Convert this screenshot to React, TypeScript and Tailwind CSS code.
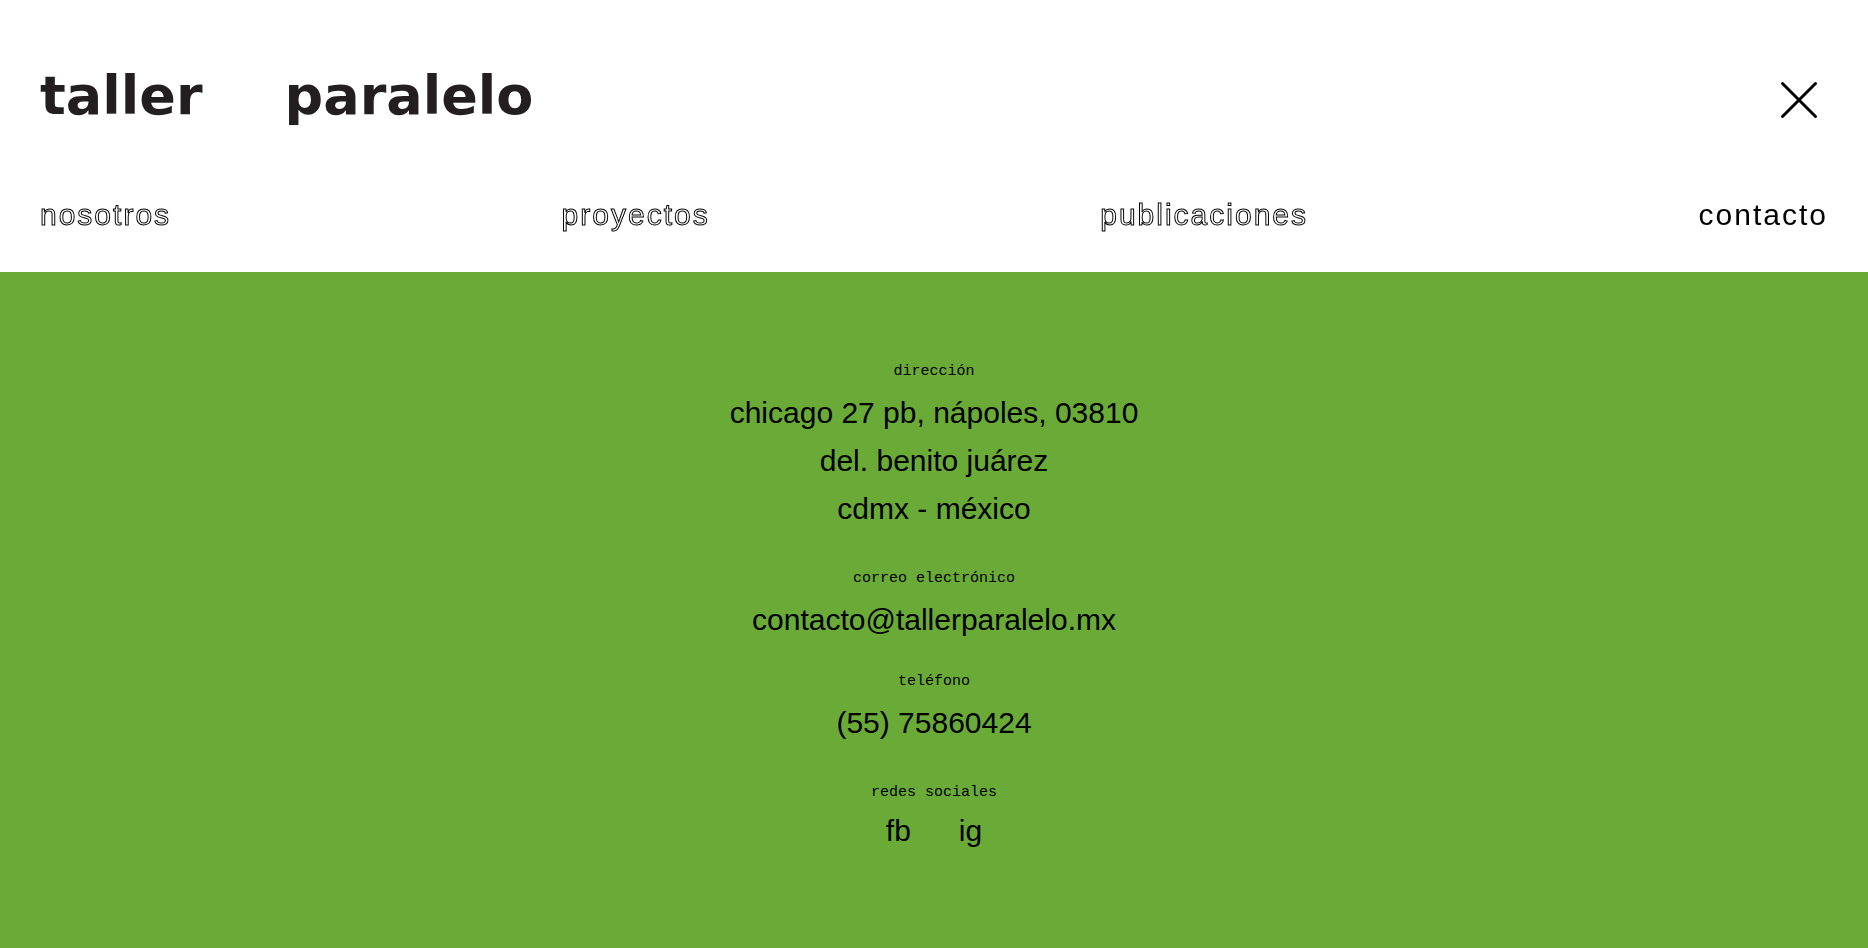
import type { ReactNode } from "react";
import clsx from "clsx";

const navItems = [
  { label: "nosotros", href: "#nosotros" },
  { label: "proyectos", href: "#proyectos" },
  { label: "publicaciones", href: "#publicaciones" },
  { label: "contacto", href: "#contacto", active: true },
];

function Header() {
  return (
    <header className="bg-white px-10 pt-[66px] pb-[33px]">
      <div className="flex items-end justify-between">
        <a
          href="#inicio"
          className="flex gap-[82px] font-['DejaVu_Sans',sans-serif] text-[54px] leading-[60px] font-bold text-[#231f20]"
        >
          <span>taller</span>
          <span>paralelo</span>
        </a>
        <button type="button" aria-label="cerrar menú" className="mr-[3px] size-[52px] cursor-pointer">
          <svg viewBox="0 0 52 52" fill="none" stroke="#000" strokeWidth="3" strokeLinecap="round">
            <path d="M9.5 9.5 42.5 42.5M42.5 9.5 9.5 42.5" />
          </svg>
        </button>
      </div>

      <nav className="mt-[65px] flex justify-between text-[30px] leading-[48px] tracking-[2px] will-change-transform">
        {navItems.map((item) => (
          <a
            key={item.label}
            href={item.href}
            className={clsx(
              item.active ? "text-black" : "text-transparent [-webkit-text-stroke:1px_#000]"
            )}
          >
            {item.label}
          </a>
        ))}
      </nav>
    </header>
  );
}

function Label({ children }: { children: ReactNode }) {
  return (
    <h2 className="font-['Liberation_Mono',monospace] text-[15px] leading-5">{children}</h2>
  );
}

export default function App() {
  return (
    <div className="flex min-h-screen flex-col font-['Liberation_Sans',sans-serif] text-black antialiased">
      <Header />

      <main className="flex-1 bg-[#6aaa37] px-10 pt-[90px] pb-20 text-center text-[30px] leading-[48px]">
        <section>
          <Label>dirección</Label>
          <address className="mt-[7px] not-italic">
            chicago 27 pb, nápoles, 03810
            <br />
            del. benito juárez
            <br />
            cdmx - méxico
          </address>
        </section>

        <section className="mt-9">
          <Label>correo electrónico</Label>
          <p className="mt-[7px]">
            <a href="mailto:contacto@tallerparalelo.mx">contacto@tallerparalelo.mx</a>
          </p>
        </section>

        <section className="mt-7">
          <Label>teléfono</Label>
          <p className="mt-[7px]">
            <a href="tel:5575860424">(55) 75860424</a>
          </p>
        </section>

        <section className="mt-9">
          <Label>redes sociales</Label>
          <div className="mt-1 flex justify-center gap-12">
            <a href="#fb">fb</a>
            <a href="#ig">ig</a>
          </div>
        </section>
      </main>
    </div>
  );
}
